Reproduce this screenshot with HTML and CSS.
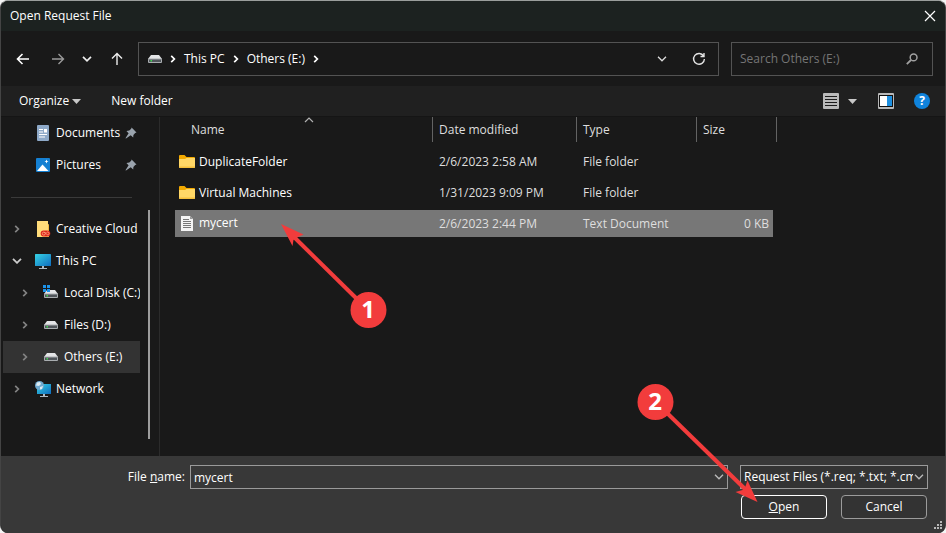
FILE: index.html
```
<!DOCTYPE html>
<html lang="en">
<head>
	<meta charset="utf-8">
	<meta name="viewport" content="width=device-width, initial-scale=1.0">
	<title>Open Request File</title>
	<link rel="stylesheet" href="styles.css">
</head>

<body>

<!-- shared icons -->
<svg class="defs" width="0" height="0">
	<symbol id="drive" viewBox="0 0 14 8">
		<path d="M3 0h8l3 4H0z" fill="#e4e5e7"/>
		<rect y="3.5" width="14" height="4.5" rx="1" fill="#a9adb0"/>
		<rect x="1" y="4.5" width="12" height="2.5" fill="#50555a"/>
		<rect x="2.5" y="5" width="1.5" height="1.5" fill="#3ddc50"/>
	</symbol>
	<symbol id="right" viewBox="0 0 6 8">
		<path d="M1.2 .8L4.4 4 1.2 7.2" fill="none" stroke="currentColor" stroke-width="1.7"/>
	</symbol>
	<symbol id="down" viewBox="0 0 10 6">
		<path d="M1 .8l4 4 4-4" fill="none" stroke="currentColor" stroke-width="1.3"/>
	</symbol>
	<symbol id="caret" viewBox="0 0 9 5">
		<path d="M0 0h9L4.500 5z" fill="#c8c8c8"/>
	</symbol>
	<symbol id="pin" viewBox="0 0 12 12">
		<path d="M6.600 .5l4.900 4.900-1.300.6-1.800 1.900-.2 2.700-2.500-2.300L1 11.600l-.5-.4 3.100-4.900L1.400 4l2.900-.4L6.200 1.800z" fill="#9aa3ad"/>
	</symbol>
	<symbol id="folder" viewBox="0 0 16 14">
		<path d="M0 1Q0 0 1 0h4.500L7.500 2H15q1 0 1 1v5H0z" fill="#f2a900"/>
		<path d="M0 4h6L7.500 3H16v9q0 1-1 1H1q-1 0-1-1z" fill="#ffd767"/>
		<path d="M0 11.500h16v.5q0 1-1 1H1q-1 0-1-1z" fill="#f5bf3c"/>
	</symbol>
	<symbol id="monitor" viewBox="0 0 16 16">
		<rect y="1" width="16" height="12" rx=".5" fill="url(#screen)"/>
		<path d="M7 13h2v2h3v1H4v-1h3z" fill="#aeb9c4"/>
	</symbol>
	<linearGradient id="screen" x2="1" y2="1">
		<stop offset="0" stop-color="#36d3e4"/>
		<stop offset="1" stop-color="#0f6cc0"/>
	</linearGradient>
</svg>

<main class="dialog">
	<header class="titlebar">
		<h1 class="title">Open Request File</h1>
		<button class="icon-button close" type="button" aria-label="Close">
			<svg width="12" height="12" viewBox="0 0 12 12"><path d="M1 1l10 10M11 1L1 11" stroke="#fff" stroke-width="1.200"/></svg>
		</button>
	</header>

	<div class="navbar">
		<button class="icon-button" type="button" aria-label="Back">
			<svg width="14" height="14" viewBox="0 0 14 14"><path d="M13 7H1.500M6.500 2l-5 5 5 5" fill="none" stroke="#fff" stroke-width="1.600"/></svg>
		</button>
		<button class="icon-button" type="button" aria-label="Forward">
			<svg width="14" height="14" viewBox="0 0 14 14"><path d="M1 7h11.500M7.500 2l5 5-5 5" fill="none" stroke="#9a9a9a" stroke-width="1.400"/></svg>
		</button>
		<button class="icon-button small" type="button" aria-label="Recent locations">
			<svg width="10" height="6" viewBox="0 0 10 6"><path d="M1 .8l4 4 4-4" fill="none" stroke="#eee" stroke-width="1.700"/></svg>
		</button>
		<button class="icon-button" type="button" aria-label="Up">
			<svg width="14" height="14" viewBox="0 0 14 14"><path d="M7 13V1.500M2 6.500l5-5 5 5" fill="none" stroke="#eee" stroke-width="1.400"/></svg>
		</button>
		<nav class="address" aria-label="Address">
			<svg width="14" height="8"><use href="#drive"/></svg>
			<svg width="6" height="8"><use href="#right"/></svg>
			<a href="#">This PC</a>
			<svg width="6" height="8"><use href="#right"/></svg>
			<a href="#">Others (E:)</a>
			<svg width="6" height="8"><use href="#right"/></svg>
			<span class="spacer"></span>
			<button class="icon-button" type="button" aria-label="Previous locations">
				<svg width="10" height="6"><use href="#down"/></svg>
			</button>
			<button class="icon-button" type="button" aria-label="Refresh">
				<svg width="14" height="14" viewBox="0 0 14 14"><path d="M11.600 4A5.400 5.400 0 1 0 12.400 7M12 1v3.500H8.500" fill="none" stroke="#e4e4e4" stroke-width="1.400"/></svg>
			</button>
		</nav>
		<div class="search">
			<input type="search" placeholder="Search Others (E:)" aria-label="Search Others (E:)">
			<svg width="12" height="12" viewBox="0 0 12 12"><circle cx="7.600" cy="4.400" r="3.400" fill="none" stroke="#a0a0a0" stroke-width="1.500"/><path d="M5 7L.8 11.200" stroke="#a0a0a0" stroke-width="1.800"/></svg>
		</div>
	</div>

	<div class="toolbar">
		<button class="command organize" type="button">Organize <svg width="9" height="5"><use href="#caret"/></svg></button>
		<button class="command" type="button">New folder</button>
		<span class="spacer"></span>
		<button class="command view" type="button" aria-label="Change your view">
			<svg width="16" height="16" viewBox="0 0 16 16"><rect width="16" height="16" rx="1" fill="#b9b9b9"/><path d="M2 3.500h12M2 6.500h12M2 9.500h12M2 12.500h12" stroke="#1b1b1b"/></svg>
			<svg width="9" height="5"><use href="#caret"/></svg>
		</button>
		<button class="command preview" type="button" aria-label="Show the preview pane">
			<svg width="16" height="16" viewBox="0 0 16 16"><rect width="16" height="16" rx="1" fill="#b9b9b9"/><rect x="1" y="2" width="14" height="12" fill="#111"/><rect x="2" y="3" width="7" height="10" fill="#fff"/><rect x="9" y="3" width="5" height="10" fill="#1c8fe0"/></svg>
		</button>
		<button class="help" type="button" aria-label="Get help">?</button>
	</div>

	<div class="content">
		<aside class="sidebar">
			<ul class="tree">
				<li><a class="node" href="#">
					<svg class="twisty"></svg>
					<svg width="16" height="16" viewBox="0 0 16 16"><rect x="2" width="12" height="16" rx="1" fill="#8ea9c8"/><path d="M4 4.500h4M4 7h4M4 9.500h8M4 12h6" stroke="#fff" stroke-width="1.200"/><rect x="9" y="4" width="3" height="3.500" fill="#fff"/></svg>
					<span class="label">Documents</span>
					<svg class="pin" width="12" height="12"><use href="#pin"/></svg>
				</a></li>
				<li><a class="node" href="#">
					<svg class="twisty"></svg>
					<svg width="16" height="16" viewBox="0 0 16 16"><rect x="1" y="1" width="14" height="14" rx="1" fill="#1580d2"/><path d="M2 14l5.500-6.500L13.500 14z" fill="#fff"/><path d="M11.500 2.500l.6 1.400 1.400.6-1.400.6-.6 1.400-.6-1.400-1.400-.6 1.400-.6z" fill="#fff"/></svg>
					<span class="label">Pictures</span>
					<svg class="pin" width="12" height="12"><use href="#pin"/></svg>
				</a></li>
				<li class="separator"></li>
				<li><a class="node" href="#">
					<svg class="twisty" viewBox="0 0 6 8"><use href="#right"/></svg>
					<svg width="16" height="16" viewBox="0 0 16 16"><path d="M2 0h11v3l1 1v12H2z" fill="#ffdc7a"/><path d="M13 3l1 1v12h-1z" fill="#f3bb45"/><path d="M8.800 9.500h3.500a3 3 0 1 1 0 6H8.500a3 3 0 0 1 .3-6z" fill="#e0261b"/><circle cx="8.800" cy="12.600" r="1.500" fill="none" stroke="#ffb48e" stroke-width=".8"/><path d="M9.500 11l3 3a1.500 1.500 0 1 0-1-2.500" fill="none" stroke="#ffb48e" stroke-width=".8"/></svg>
					<span class="label">Creative Cloud Files</span>
				</a></li>
				<li><a class="node open" href="#">
					<svg class="twisty down" viewBox="0 0 10 6"><path d="M1 .8l4 4 4-4" fill="none" stroke="#ccc" stroke-width="1.800"/></svg>
					<svg width="16" height="16"><use href="#monitor"/></svg>
					<span class="label">This PC</span>
				</a>
				<ul class="tree">
					<li><a class="node child" href="#">
						<svg class="twisty" viewBox="0 0 6 8"><use href="#right"/></svg>
						<svg width="16" height="16" viewBox="0 0 16 16"><use href="#drive" x="1" y="5" width="14" height="8"/><path d="M0 0h3v3H0zM4 0h3v3H4zM0 4h3v3H0zM4 4h3v3H4z" fill="#1c93ea"/></svg>
						<span class="label">Local Disk (C:)</span>
					</a></li>
					<li><a class="node child" href="#">
						<svg class="twisty" viewBox="0 0 6 8"><use href="#right"/></svg>
						<svg width="16" height="16" viewBox="0 0 16 16"><use href="#drive" x="1" y="4" width="14" height="8"/></svg>
						<span class="label">Files (D:)</span>
					</a></li>
					<li><a class="node child current" href="#">
						<svg class="twisty" viewBox="0 0 6 8"><use href="#right"/></svg>
						<svg width="16" height="16" viewBox="0 0 16 16"><use href="#drive" x="1" y="4" width="14" height="8"/></svg>
						<span class="label">Others (E:)</span>
					</a></li>
				</ul></li>
				<li><a class="node" href="#">
					<svg class="twisty" viewBox="0 0 6 8"><use href="#right"/></svg>
					<svg width="16" height="16" viewBox="0 0 16 16"><rect x="2" y="3" width="14" height="10" fill="url(#screen)"/><path d="M8 13h2v2h3v1H5v-1h3z" fill="#aeb9c4"/><circle cx="4.500" cy="4.500" r="4.500" fill="#6fa9cf"/><path d="M2 1.500l3-.5 1 2-2 2-3-.5zM5 6l3-1-1 3-2 .5z" fill="#dcebf3"/></svg>
					<span class="label">Network</span>
				</a></li>
			</ul>
			<div class="scrollbar"></div>
		</aside>

		<section class="list">
			<table class="files">
				<colgroup><col class="col-name"><col class="col-date"><col class="col-type"><col class="col-size"></colgroup>
				<thead>
					<tr>
						<th scope="col"><span>Name<svg class="sort" width="10" height="6" viewBox="0 0 10 6"><path d="M1 5l4-4 4 4" fill="none" stroke="#b0b0b0" stroke-width="1.200"/></svg></span></th>
						<th scope="col"><span>Date modified</span></th>
						<th scope="col"><span>Type</span></th>
						<th scope="col"><span>Size</span></th>
					</tr>
				</thead>
				<tbody>
					<tr>
						<td><svg width="16" height="14"><use href="#folder"/></svg>DuplicateFolder</td>
						<td>2/6/2023 2:58 AM</td>
						<td>File folder</td>
						<td></td>
					</tr>
					<tr>
						<td><svg width="16" height="14"><use href="#folder"/></svg>Virtual Machines</td>
						<td>1/31/2023 9:09 PM</td>
						<td>File folder</td>
						<td></td>
					</tr>
					<tr class="selected">
						<td><svg width="16" height="16" viewBox="0 0 16 16"><path d="M2 0h9l3 3v12H2z" fill="#f4f4f4"/><path d="M11 0l3 3h-3z" fill="#999"/><path d="M4 3.500h6M4 5.500h8M4 7.500h8M4 9.500h8M4 11.500h8" stroke="#777"/></svg>mycert</td>
						<td>2/6/2023 2:44 PM</td>
						<td>Text Document</td>
						<td>0 KB</td>
					</tr>
				</tbody>
			</table>
		</section>
	</div>

	<form class="footer" action="#">
		<div class="fields">
			<label class="name-label" for="filename">File <u>n</u>ame:</label>
			<div class="combo name-combo">
				<input id="filename" type="text" value="mycert">
				<svg width="10" height="6"><use href="#down"/></svg>
			</div>
			<div class="combo type-combo">
				<select aria-label="File type">
					<option>Request Files (*.req; *.txt; *.cmc)</option>
				</select>
				<svg width="10" height="6"><use href="#down"/></svg>
			</div>
		</div>
		<div class="actions">
			<button class="button default" type="submit"><u>O</u>pen</button>
			<button class="button" type="button">Cancel</button>
		</div>
		<svg class="grip" width="8" height="8" viewBox="0 0 8 8"><path d="M6 0h2v2H6zM3 3h2v2H3zM6 3h2v2H6zM0 6h2v2H0zM3 6h2v2H3zM6 6h2v2H6z" fill="#b8b8b8"/></svg>
	</form>

	<!-- numbered steps -->
	<svg class="step step-1" width="106" height="105" viewBox="281 224 106 105">
		<path d="M295 238l62 61" stroke="#f23c3c" stroke-width="4"/>
		<path d="M281 224l22.500 10.500-6.500 3-3.500 2.500-1 6z" fill="#f23c3c"/>
		<circle cx="368.500" cy="310" r="18" fill="#f23c3c"/>
		<text x="368" y="318" text-anchor="middle">1</text>
	</svg>
	<svg class="step step-2" width="122" height="120" viewBox="637 383 122 120">
		<path d="M666 412l79 77" stroke="#f23c3c" stroke-width="4"/>
		<path d="M757.500 502l-10-21.500-2.500 7-2.500 2.500-7 2z" fill="#f23c3c"/>
		<circle cx="655.500" cy="402" r="18" fill="#f23c3c"/>
		<text x="655" y="410" text-anchor="middle">2</text>
	</svg>
</main>

</body>
</html>
```
FILE: styles.css
```
* { box-sizing: border-box; }
body { margin: 0; background: #f4f4f4; color: #fff; font: 12px/16px "Open Sans", "Noto Sans", sans-serif; }
button, input, select { font: inherit; color: inherit; margin: 0; padding: 0; border: 0; background: none; }
a { color: inherit; text-decoration: none; }
ul { list-style: none; margin: 0; padding: 0; }
svg { flex: none; }
.defs { position: absolute; }
.spacer { flex: 1; }

.dialog { position: relative; display: flex; flex-direction: column; min-height: 100vh; overflow: hidden; background: #191919; border: 1px solid #444; border-top-color: #9a9e9c; border-bottom: 0; border-radius: 8px; }

.titlebar { display: flex; align-items: center; justify-content: space-between; height: 30px; padding-left: 9px; background: #1c2220; }
.title { margin: 0; font-size: 12px; font-weight: normal; }
.icon-button { display: flex; align-items: center; justify-content: center; width: 35px; height: 30px; }
.icon-button.small { width: 24px; }
.icon-button.close { width: 30px; }

.navbar { display: flex; align-items: center; height: 55px; padding: 0 12px 0 4px; }
.address { display: flex; flex: 1; align-items: center; gap: 8px; height: 34px; margin: 0 12px 0 4px; padding: 0 5px 0 9px; border: 1px solid #535353; }
.address .icon-button { width: 29px; color: #ddd; }
.search { display: flex; align-items: center; width: 202px; height: 34px; padding: 0 14px 0 8px; border: 1px solid #535353; }
.search input { flex: 1; min-width: 0; outline: 0; }
.search input::placeholder { color: #757575; opacity: 1; }

.toolbar { display: flex; align-items: center; height: 30px; padding: 0 15px 0 18px; background: #202020; }
.command { display: flex; align-items: center; margin-right: 30px; }
.command.organize { gap: 3px; }
.command.view { gap: 9px; margin-right: 21px; }
.command.preview { margin-right: 20px; }
.help { width: 16px; height: 16px; border-radius: 50%; background: #0f83dc; font-weight: bold; line-height: 16px; }

.content { display: flex; flex: 1; border-top: 1px solid #151515; }
.sidebar { display: flex; width: 159px; padding-left: 2px; border-right: 1px solid #2b2b2b; }
.sidebar > .tree { width: 137px; }
.node { display: flex; align-items: center; height: 32px; padding-left: 11px; overflow: hidden; white-space: nowrap; }
.node.child { padding-left: 19px; }
.node.current { background: #333; }
.node .label { margin-left: 5px; }
.twisty { width: 6px; height: 10px; margin: 0 15px 0 0; color: #838383; }
.twisty.down { width: 10px; height: 6px; margin: 0 13px 0 -2px; }
.pin { margin: 0 3px 0 auto; }
.separator { height: 1px; margin: 16px 8px 15px; background: #3a3a3a; }
.scrollbar { width: 2px; margin: 93px 0 17px 8px; background: #9d9d9d; }

.list { flex: 1; padding-left: 15px; }
.files { table-layout: fixed; width: 602px; margin-top: -4px; border-collapse: separate; border-spacing: 0 4px; color: #dedede; }
.col-name { width: 258px; }
.col-date { width: 144px; }
.col-type { width: 120px; }
.col-size { width: 80px; }
.files th { height: 27px; padding: 0; font-weight: normal; text-align: left; vertical-align: top; }
.files th span { display: block; position: relative; height: 25px; padding-left: 6px; border-right: 1px solid #636363; line-height: 25px; }
.files th:first-child span { padding-left: 16px; }
.sort { position: absolute; top: 0; left: 50%; }
.files td { height: 27px; padding: 0 0 0 6px; white-space: nowrap; }
.files td:first-child { padding-left: 4px; color: #fff; }
.files td svg { margin-right: 4px; vertical-align: middle; }
.files td:last-child { padding-right: 4px; border-right: 4px solid transparent; background-clip: padding-box; text-align: right; }
.selected td { background: #777; }

.footer { position: relative; height: 77px; padding: 9px 17px 0 0; background: #383838; }
.fields { display: flex; }
.name-label { width: 184px; line-height: 24px; text-align: right; }
.combo { display: flex; position: relative; align-items: center; height: 24px; border: 1px solid #9a9a9a; }
.combo input, .combo select { width: 100%; height: 100%; outline: 0; appearance: none; }
.combo svg { position: absolute; right: 3px; color: #bbb; pointer-events: none; }
.name-combo { flex: 1; margin: 0 12px 0 5px; }
.name-combo input { padding: 0 18px 0 3px; }
.type-combo { width: 188px; background: #333; }
.type-combo select { padding: 0 14px 0 3px; }
.actions { display: flex; justify-content: flex-end; gap: 14px; margin-top: 6px; padding-right: 1px; }
.button { width: 86px; height: 24px; border: 1px solid #9b9b9b; border-radius: 4px; background: #333; }
.button.default { border-color: #fff; }
.grip { position: absolute; right: 3px; bottom: 4px; }

.step { position: absolute; pointer-events: none; }
.step text { fill: #fff; font: bold 24px "Open Sans", sans-serif; }
.step-1 { left: 280px; top: 223px; }
.step-2 { left: 636px; top: 382px; }
```
